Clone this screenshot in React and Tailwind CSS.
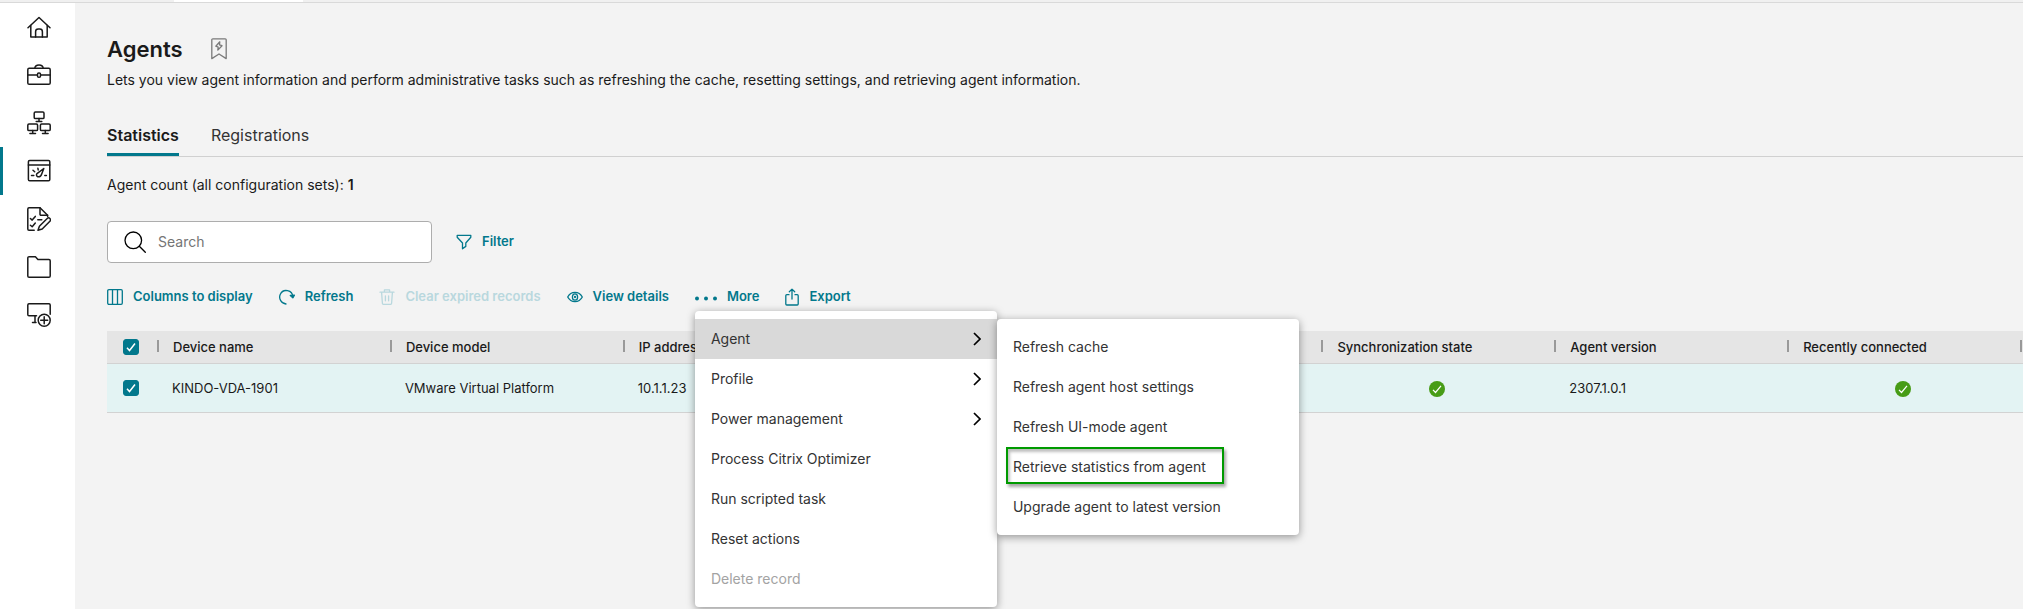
const line = {
  fill: 'none',
  stroke: 'currentColor',
  strokeWidth: 1.3,
  strokeLinecap: 'round',
  strokeLinejoin: 'round',
};

function NavGlyph({ children }) {
  return (
    <svg viewBox="0 0 24 24" className="size-6" aria-hidden="true" {...line} strokeWidth={1.5}>
      {children}
    </svg>
  );
}

const navItems = [
  {
    label: 'Home',
    icon: (
      <NavGlyph>
        <path d="M1 12.700 12 2.500l11 10.200" />
        <path d="M3.800 10.500V22h16.400V10.500" />
        <path d="M8.600 22v-5.300a2.600 2.600 0 0 1 2.600-2.600h1.600a2.600 2.600 0 0 1 2.600 2.600V22" />
      </NavGlyph>
    ),
  },
  {
    label: 'Configuration sets',
    icon: (
      <NavGlyph>
        <rect x="0.8" y="5.300" width="22.400" height="16" rx="1.400" />
        <path d="M7.800 5.200C8 3 9.800 1.900 12 1.900s4 1.100 4.200 3.300M.8 12h9.500M13.700 12h9.500" />
        <rect x="10.500" y="9.900" width="3" height="4.300" rx="1.300" />
      </NavGlyph>
    ),
  },
  {
    label: 'Directory objects',
    icon: (
      <NavGlyph>
        <rect x="7.200" y="1" width="9.800" height="6.600" rx="1.200" />
        <path d="M12 7.600v2.700M9.200 10.400h5.600" />
        <rect x="0.8" y="13" width="9.800" height="6.600" rx="1.200" />
        <path d="M5.700 19.600v2.700M2.900 22.400h5.600" />
        <rect x="13.400" y="13" width="9.800" height="6.600" rx="1.200" />
        <path d="M18.300 19.600v2.700M15.500 22.400h5.600" />
      </NavGlyph>
    ),
  },
  {
    label: 'Monitoring',
    active: true,
    icon: (
      <NavGlyph>
        <rect x="1.400" y="1.400" width="21.400" height="20.400" rx="1.300" />
        <path d="M1.400 6h21.400" />
        <path d="M16.800 9.500 10 14.600a1.900 1.900 0 0 0 .8 3.100c2.200.6 3.300-.9 3.900-2.700z" />
        <path d="M4.500 16.500h2.300M6 11.300l1.700 1.500M10.900 9.300l.3 1.600M17.800 16.500h1.600" />
      </NavGlyph>
    ),
  },
  {
    label: 'Scripted tasks',
    icon: (
      <NavGlyph>
        <path d="M7.200 23.200H2A1.300 1.300 0 0 1 .8 21.900V2A1.300 1.300 0 0 1 2 .8h11l7.600 7.400v1.300" />
        <path d="M13 .8v6.400a1 1 0 0 0 1 1h6.600" />
        <path d="m3.400 11.500 1.800 1.600 3.100-3.700M3.400 18.200l1.800 1.600 3.100-3.700M10.800 12.800h4" />
        <path d="m11 23.200 1.400-4 7.800-7.700a1.900 1.900 0 0 1 2.700 2.700l-7.700 7.800z" />
      </NavGlyph>
    ),
  },
  {
    label: 'Files',
    icon: (
      <NavGlyph>
        <path d="M.8 3a1.300 1.300 0 0 1 1.300-1.300h6.300l2.500 2.700h11a1.300 1.300 0 0 1 1.300 1.300v15.300a1.300 1.300 0 0 1-1.300 1.300H2.100A1.300 1.300 0 0 1 .8 21z" />
      </NavGlyph>
    ),
  },
  {
    label: 'Enhancements',
    icon: (
      <NavGlyph>
        <path d="M9.500 12.700H2A1.300 1.300 0 0 1 .8 11.400V2A1.300 1.300 0 0 1 2 .8h20A1.300 1.300 0 0 1 23.200 2v9.300M8 12.700v6.800M5.500 19.600H9" />
        <circle cx="17.200" cy="17.200" r="6" />
        <path d="M17.200 13.700v7M13.700 17.200h7" />
      </NavGlyph>
    ),
  },
];

function Sidebar() {
  return (
    <nav aria-label="Main" className="w-[75px] shrink-0 bg-white">
      {navItems.map((item) => (
        <a
          key={item.label}
          href="#"
          aria-label={item.label}
          className={
            item.active
              ? 'flex h-12 items-center justify-center border-l-3 border-[#02788c]'
              : 'flex h-12 items-center justify-center border-l-3 border-transparent'
          }
        >
          {item.icon}
        </a>
      ))}
    </nav>
  );
}

function BookmarkIcon() {
  return (
    <svg viewBox="0 0 16 22" className="h-[22px] w-4" aria-hidden="true" {...line}>
      <path d="M.8 1.800a1 1 0 0 1 1-1h12.400a1 1 0 0 1 1 1v18.800L8 16 .8 20.600z" />
      <path d="M8.800 3.800 4.800 8.200l2.400.9-.4 3 4.200-4.400-2.500-.9z" />
    </svg>
  );
}

function ColumnsIcon() {
  return (
    <svg viewBox="0 0 16 16" className="size-4" aria-hidden="true" {...line}>
      <rect x="0.700" y="0.700" width="14.600" height="14.600" rx="1.200" />
      <path d="M5.500.7v14.600M10.500.7v14.600" />
    </svg>
  );
}

function RefreshIcon() {
  return (
    <svg viewBox="0 0 16 16" className="size-4" aria-hidden="true" {...line}>
      <path d="M7 15A7 7 0 0 1 1.200 5.400 6.600 6.600 0 0 1 13.800 8" />
      <path d="M11.300 6.500 13.800 8.800l1.700-2.600z" fill="currentColor" />
    </svg>
  );
}

function TrashIcon() {
  return (
    <svg viewBox="0 0 16 16" className="size-4" aria-hidden="true" {...line}>
      <path d="M1 3.200h14M5.400 3V.9h5.200V3M2.600 3.400l.8 10.900a1 1 0 0 0 1 1h7.200a1 1 0 0 0 1-1l.8-10.900M6.400 6.800v5M9.600 6.800v5" />
    </svg>
  );
}

function EyeIcon() {
  return (
    <svg viewBox="0 0 16 16" className="size-4" aria-hidden="true" {...line}>
      <path d="M.7 8C2.300 5 5 3.400 8 3.400S13.700 5 15.300 8c-1.600 3-4.300 4.600-7.300 4.600S2.300 11 .7 8z" />
      <ellipse cx="8" cy="8" rx="2.600" ry="3.200" />
      <circle cx="8" cy="8" r="0.500" />
    </svg>
  );
}

function DotsIcon() {
  return (
    <svg viewBox="0 0 22 16" className="h-4 w-[22px]" fill="currentColor" aria-hidden="true">
      <circle cx="2" cy="9.500" r="2" />
      <circle cx="11" cy="9.500" r="2" />
      <circle cx="20" cy="9.500" r="2" />
    </svg>
  );
}

function ExportIcon() {
  return (
    <svg viewBox="0 0 14 18" className="h-[18px] w-3.5" aria-hidden="true" {...line}>
      <path d="M4 6.700H1.800a1 1 0 0 0-1 1V16a1 1 0 0 0 1 1h10.400a1 1 0 0 0 1-1V7.700a1 1 0 0 0-1-1H10" />
      <path d="M7 11V1.200M4.300 3.800 7 1.100l2.700 2.700" />
    </svg>
  );
}

function FilterIcon() {
  return (
    <svg viewBox="0 0 16 16" className="size-4" aria-hidden="true" {...line}>
      <path d="M1.200 1.300h13.600v2L9.800 9v3.400L6.500 14.800V9L1.200 3.300z" />
    </svg>
  );
}

function SearchIcon() {
  return (
    <svg viewBox="0 0 22 22" className="size-[22px]" aria-hidden="true" {...line}>
      <circle cx="9.300" cy="9.300" r="8.300" />
      <path d="m15.300 15.300 6 6" />
    </svg>
  );
}

function ChevronIcon() {
  return (
    <svg viewBox="0 0 8 14" className="h-3.5 w-2 text-black" fill="none" stroke="currentColor" strokeWidth="1.700" aria-hidden="true">
      <path d="m1 1 6 6-6 6" />
    </svg>
  );
}

function StatusOk() {
  return (
    <svg viewBox="0 0 16 16" className="mx-auto size-4" role="img" aria-label="Yes">
      <circle cx="8" cy="8" r="8" fill="#479c16" />
      <path d="m4 8.800 2.500 2.700L12 4.800" fill="none" stroke="#fff" strokeWidth="1.200" />
    </svg>
  );
}

function Checkbox({ label }) {
  return (
    <label className="mx-auto grid size-4">
      <input
        type="checkbox"
        defaultChecked
        aria-label={label}
        className="peer col-start-1 row-start-1 size-4 appearance-none rounded-[3px] border border-[#02788c] bg-white checked:bg-[#02788c]"
      />
      <svg viewBox="0 0 16 16" className="pointer-events-none invisible col-start-1 row-start-1 size-4 peer-checked:visible" aria-hidden="true">
        <path d="m4 8.800 2.500 2.700L12 4.500" fill="none" stroke="#fff" strokeWidth="1.500" />
      </svg>
    </label>
  );
}

function ToolButton({ icon, label, disabled }) {
  return (
    <button
      type="button"
      disabled={disabled}
      className="flex h-6 items-center gap-2.5 text-[13px] font-semibold whitespace-nowrap text-[#02788c] disabled:text-[#b9d8de]"
    >
      {icon}
      {label}
    </button>
  );
}

const agentActions = [
  'Refresh cache',
  'Refresh agent host settings',
  'Refresh UI-mode agent',
  'Retrieve statistics from agent',
  'Upgrade agent to latest version',
];

function AgentSubmenu() {
  return (
    <ul
      role="menu"
      className="absolute top-2 left-full w-[302px] rounded-[4px] bg-white py-2 shadow-[0_2px_8px_rgba(0,0,0,0.4)]"
    >
      {agentActions.map((label) => (
        <li key={label} role="none" className="relative">
          <button type="button" role="menuitem" className="flex h-10 w-full items-center px-4 text-left text-sm text-[#333333]">
            {label}
          </button>
          {label === 'Retrieve statistics from agent' && (
            <span className="pointer-events-none absolute top-0 left-[9px] h-[37px] w-[218px] border-2 border-[#009a00] shadow-[2px_3px_3px_rgba(0,0,0,0.35),inset_2px_3px_3px_rgba(0,0,0,0.25)]" />
          )}
        </li>
      ))}
    </ul>
  );
}

const moreItems = [
  { label: 'Agent', more: true, open: true },
  { label: 'Profile', more: true },
  { label: 'Power management', more: true },
  { label: 'Process Citrix Optimizer' },
  { label: 'Run scripted task' },
  { label: 'Reset actions' },
  { label: 'Delete record', disabled: true },
];

function MoreMenu() {
  return (
    <div className="absolute top-full left-0 z-10 mt-[2px] w-[302px] rounded-[4px] bg-white py-2 shadow-[0_2px_8px_rgba(0,0,0,0.4)]">
      <ul role="menu">
        {moreItems.map((item) => (
          <li key={item.label} role="none">
            <button
              type="button"
              role="menuitem"
              disabled={item.disabled}
              className={
                item.open
                  ? 'flex h-10 w-full items-center justify-between bg-[#d9d9d9] px-4 text-left text-sm text-[#333333]'
                  : 'flex h-10 w-full items-center justify-between px-4 text-left text-sm text-[#333333] disabled:text-[#a3a3a3]'
              }
            >
              {item.label}
              {item.more && <ChevronIcon />}
            </button>
          </li>
        ))}
      </ul>
      <AgentSubmenu />
    </div>
  );
}

const columns = [
  'Device name',
  'Device model',
  'IP address',
  'Configuration set',
  'Last connection',
  'Synchronization state',
  'Agent version',
  'Recently connected',
];

const row = ['KINDO-VDA-1901', 'VMware Virtual Platform', '10.1.1.23', '', '', <StatusOk />, '2307.1.0.1', <StatusOk />];

function ColumnMark() {
  return <span className="-mt-1 block h-3 w-[2px] shrink-0 bg-[#999999]" />;
}

function AgentTable() {
  return (
    <table className="mt-[22px] w-full table-fixed border-separate border-spacing-0 text-[13px] text-[#1a1a1a] [&_td]:border-b [&_td]:border-[#d2d2d2] [&_th]:border-b [&_th]:border-[#d2d2d2]">
      <colgroup>
        <col className="w-[50px]" />
        {columns.map((c) => (
          <col key={c} />
        ))}
        <col className="w-[3px]" />
      </colgroup>
      <thead>
        <tr className="h-[33px] bg-[#e5e5e5]">
          <th className="p-0 pr-[2px]">
            <Checkbox label="Select all agents" />
          </th>
          {columns.map((c) => (
            <th key={c} className="p-0 pt-px text-left font-medium whitespace-nowrap">
              <div className="flex items-center gap-3.5">
                <ColumnMark />
                {c}
              </div>
            </th>
          ))}
          <th className="p-0 pt-px">
            <ColumnMark />
          </th>
        </tr>
      </thead>
      <tbody>
        <tr className="h-[49px] bg-[#e3f3f3]">
          <td className="p-0 pr-[2px]">
            <Checkbox label="Select KINDO-VDA-1901" />
          </td>
          {row.map((value, i) => (
            <td key={columns[i]} className="p-0 pt-px pr-[17px] pl-[15px] whitespace-nowrap">
              {value}
            </td>
          ))}
          <td className="p-0" />
        </tr>
      </tbody>
    </table>
  );
}

export default function App() {
  return (
    <div className="flex min-h-screen flex-col overflow-x-hidden bg-[#f3f3f3] font-['Inter',sans-serif] text-[#1a1a1a]">
      <div className="flex h-[3px] border-b border-[#d9d9d9] bg-[#f0f0f0] pl-[174px]">
        <div className="w-[129px] bg-white" />
      </div>
      <div className="flex flex-1">
        <Sidebar />
        <main className="min-w-0 flex-1 pt-[30px] pl-8">
          <div className="flex h-8 items-center gap-7">
            <h1 className="text-[22px] leading-8 font-semibold">Agents</h1>
            <button type="button" aria-label="Bookmark" className="text-[#7a7a7a]">
              <BookmarkIcon />
            </button>
          </div>
          <p className="mt-1 text-sm leading-[22px]">
            Lets you view agent information and perform administrative tasks such as refreshing the cache, resetting
            settings, and retrieving agent information.
          </p>

          <div role="tablist" className="mt-8 flex gap-8 border-b border-[#d0d0d0] text-base leading-6">
            <button type="button" role="tab" aria-selected="true" className="border-b-3 border-[#02788c] pb-1.5 font-semibold">
              Statistics
            </button>
            <button type="button" role="tab" aria-selected="false" className="border-b-3 border-transparent pb-1.5 text-[#333333]">
              Registrations
            </button>
          </div>

          <p className="mt-[18px] text-sm leading-5">
            Agent count (all configuration sets): <span className="font-semibold">1</span>
          </p>

          <div className="mt-[26px] flex items-center gap-6">
            <label className="flex h-[42px] w-[325px] items-center gap-3 rounded-[4px] border border-[#adadad] bg-white pl-4 text-black">
              <SearchIcon />
              <input
                type="text"
                aria-label="Search"
                placeholder="Search"
                className="min-w-0 flex-1 text-sm text-[#1a1a1a] outline-none placeholder:text-[#757575]"
              />
            </label>
            <ToolButton icon={<FilterIcon />} label="Filter" />
          </div>

          <div className="mt-[22px] flex items-center gap-[26px]">
            <ToolButton icon={<ColumnsIcon />} label="Columns to display" />
            <ToolButton icon={<RefreshIcon />} label="Refresh" />
            <ToolButton icon={<TrashIcon />} label="Clear expired records" disabled />
            <ToolButton icon={<EyeIcon />} label="View details" />
            <div className="relative">
              <ToolButton icon={<DotsIcon />} label="More" />
              <MoreMenu />
            </div>
            <ToolButton icon={<ExportIcon />} label="Export" />
          </div>

          <AgentTable />
        </main>
      </div>
    </div>
  );
}
